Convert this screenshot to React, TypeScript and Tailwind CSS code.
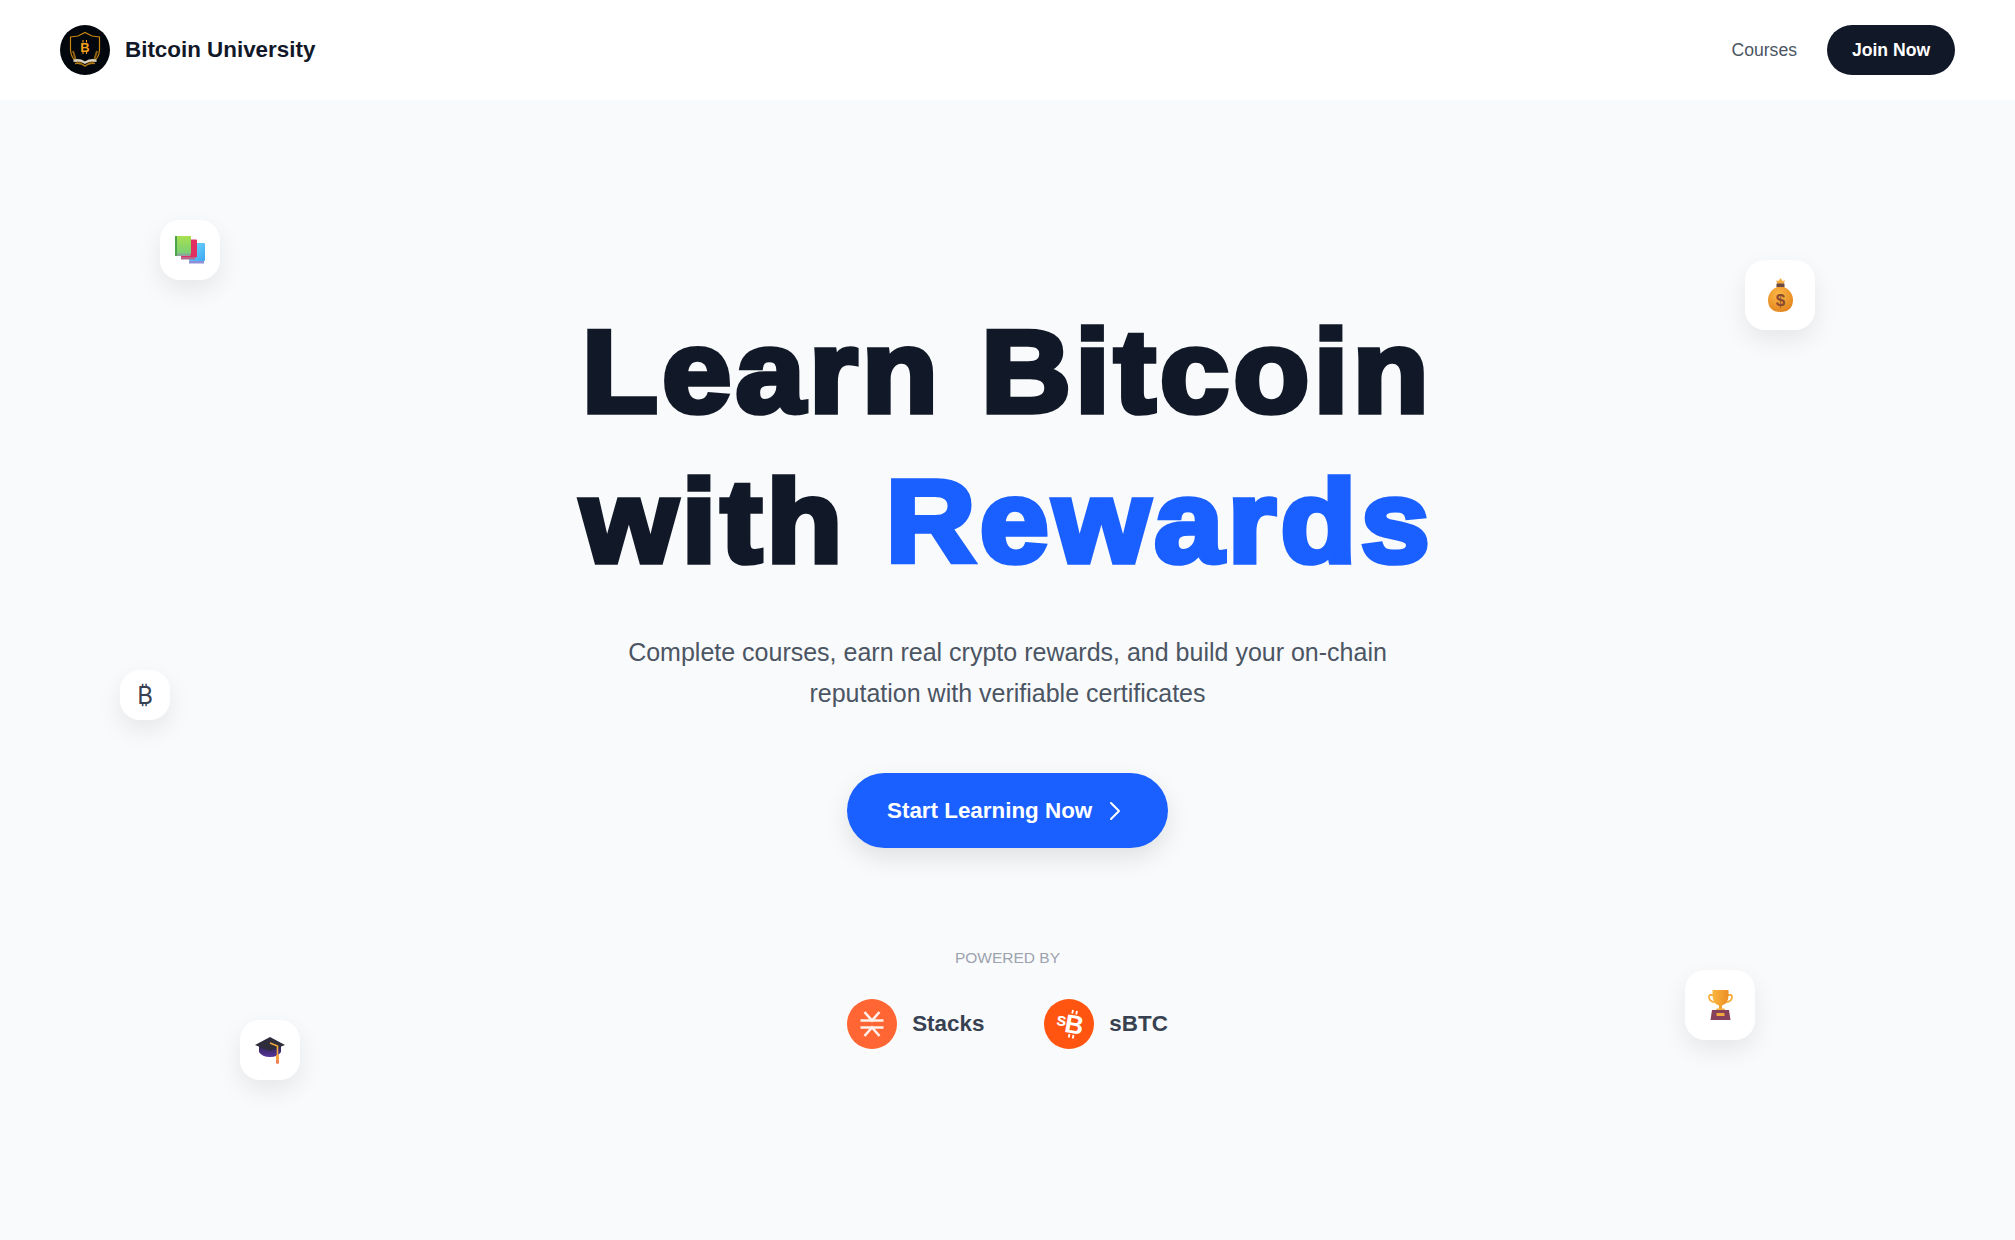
import type { ReactNode } from "react";

function LogoMark() {
  return (
    <svg viewBox="0 0 50 50" className="w-[50px] h-[50px] shrink-0">
      <circle cx="25" cy="25" r="25" fill="#02060d" />
      <path d="M10.5 12 L18 11 L25 7.5 L32 11 L39.5 12 L39.5 25 Q39 33 33 37 L17 37 Q11 33 10.5 25 Z" fill="none" stroke="#c98710" strokeWidth="1.2" />
      <path d="M13 26 L15.5 34 M37 26 L34.5 34" stroke="#8f6310" strokeWidth="2" />
      <path d="M13.5 34.5 Q20 33 25 36.5 Q30 33 36.5 34.5 L36.5 37 Q30 35.5 25 39 Q20 35.5 13.5 37 Z" fill="#d9d2bf" />
      <path d="M15 38.5 Q21 37.5 25 41 Q29 37.5 35 38.5" fill="none" stroke="#b07a12" strokeWidth="1.6" />
      <text x="25" y="27" textAnchor="middle" fontSize="13" fontWeight="700" fill="#f7a21b" fontFamily="'Liberation Sans', sans-serif">B</text>
      <path d="M23 15v2.5M26.5 15v2.5M23 26.5v2.5M26.5 26.5v2.5" stroke="#f7a21b" strokeWidth="1.1" />
    </svg>
  );
}

function BooksIcon() {
  return (
    <svg viewBox="0 0 30 28" className="w-[30px] h-[28px]">
      <defs>
        <linearGradient id="bookBlue" x1="0" y1="0" x2="1" y2="1">
          <stop offset="0" stopColor="#72dcff" />
          <stop offset="1" stopColor="#3ea6f0" />
        </linearGradient>
        <linearGradient id="bookGreen" x1="0" y1="0" x2="0" y2="1">
          <stop offset="0" stopColor="#a8e04f" />
          <stop offset="1" stopColor="#78cf78" />
        </linearGradient>
      </defs>
      <rect x="14" y="7" width="16" height="18" rx="1" fill="url(#bookBlue)" />
      <rect x="14" y="25" width="15" height="2.5" fill="#8f8fd8" />
      <rect x="6" y="3.5" width="16" height="18" rx="1" fill="#e32e62" />
      <rect x="6" y="21" width="14" height="2.5" fill="#b5698f" />
      <rect x="0" y="0" width="16" height="18" fill="url(#bookGreen)" />
      <rect x="0" y="0" width="2" height="20" fill="#4fa24d" />
      <rect x="2" y="17.5" width="13.5" height="2.5" fill="#8fa59a" />
    </svg>
  );
}

function MoneyBagIcon() {
  return (
    <svg viewBox="0 0 25 34" className="w-[25px] h-[34px]">
      <defs>
        <radialGradient id="bag" cx="0.42" cy="0.3" r="0.8">
          <stop offset="0" stopColor="#fdb845" />
          <stop offset="1" stopColor="#e0801b" />
        </radialGradient>
      </defs>
      <path d="M8 2.5 L10.5 3 L12.5 0 L14.5 3 L17 2.5 L15.5 6 L9.5 6 Z" fill="#f6ac3c" />
      <rect x="8.5" y="5.5" width="8" height="4" fill="#6b4a44" />
      <path d="M9 9 C4 11 0 16 0 22 C0 30 5 34 12.5 34 C20 34 25 30 25 22 C25 16 21 11 16 9 Z" fill="url(#bag)" />
      <text x="12.5" y="28" textAnchor="middle" fontSize="17" fontWeight="700" fill="#8a4a30" fontFamily="'Liberation Sans', sans-serif">$</text>
    </svg>
  );
}

function CapIcon() {
  return (
    <svg viewBox="0 0 30 27" className="w-[30px] h-[27px]">
      <defs>
        <linearGradient id="capBase" x1="0" y1="0" x2="0" y2="1">
          <stop offset="0" stopColor="#2e2350" />
          <stop offset="1" stopColor="#55349a" />
        </linearGradient>
      </defs>
      <path d="M4 8 L4 15 Q7 20 15 20 Q23 20 26 15 L26 8 Z" fill="url(#capBase)" />
      <path d="M15 0 L30 8 L15 14 L0 8 Z" fill="#2f2c3c" />
      <path d="M15 6 L22.5 9 L22.5 19" fill="none" stroke="#f2a83a" strokeWidth="1.6" />
      <rect x="21" y="18" width="3" height="5" fill="#f6a53b" />
      <rect x="21" y="22.5" width="3" height="4.5" rx="1.4" fill="#f47e52" />
    </svg>
  );
}

function TrophyIcon() {
  return (
    <svg viewBox="0 0 25 30" className="w-[25px] h-[30px]">
      <defs>
        <linearGradient id="cup" x1="0" y1="0" x2="1" y2="0">
          <stop offset="0" stopColor="#fab63e" />
          <stop offset="1" stopColor="#ec8d24" />
        </linearGradient>
      </defs>
      <path d="M5 5 H2.5 Q1 5 1 7 Q1 11 6.5 12.5 M20 5 H22.5 Q24 5 24 7 Q24 11 18.5 12.5" fill="none" stroke="#f6ad3a" strokeWidth="1.8" />
      <path d="M4.5 0 H20.5 V5 Q20.5 14 14 15.5 L11 15.5 Q4.5 14 4.5 5 Z" fill="url(#cup)" />
      <rect x="11" y="15" width="3" height="4" fill="#f2a02e" />
      <path d="M8.5 18.5 H16.5 L17 20 H8 Z" fill="#f6ad3a" />
      <path d="M4 20 H21 L22.5 30 H2.5 Z" fill="#86405a" />
      <rect x="8.5" y="23" width="8" height="3" fill="#f2a83a" />
    </svg>
  );
}

function StacksLogo() {
  return (
    <svg viewBox="0 0 50 50" className="w-[50px] h-[50px] shrink-0">
      <circle cx="25" cy="25" r="25" fill="#ff6633" />
      <g fill="none" stroke="#fff" strokeWidth="2.6" opacity="0.9">
        <path d="M13.5 21.5h23M13.5 28.5h23" />
        <path d="M17.5 13l7.5 8.5 7.5-8.5M17.5 37l7.5-8.5 7.5 8.5" />
      </g>
    </svg>
  );
}

function SbtcLogo() {
  return (
    <svg viewBox="0 0 50 50" className="w-[50px] h-[50px] shrink-0">
      <circle cx="25" cy="25" r="25" fill="#ff5510" />
      <g transform="rotate(10 25 25)" fill="#fff" fontFamily="'Liberation Sans', sans-serif" fontWeight="700">
        <text x="12" y="28" fontSize="18">s</text>
        <text x="21" y="33.5" fontSize="26">B</text>
      </g>
      <path d="M29 11l-.8 3.5M33 12l-.8 3.5M25.5 35l-.8 3.5M29.5 36l-.8 3.5" stroke="#fff" strokeWidth="1.8" />
    </svg>
  );
}

function FloatingCard({ className, children }: { className: string; children: ReactNode }) {
  return (
    <div className={`absolute flex items-center justify-center bg-white shadow-[0_10px_25px_rgba(0,0,0,0.08)] ${className}`}>
      {children}
    </div>
  );
}

export default function App() {
  return (
    <div className="min-h-[1240px] bg-[#f9fafb] font-['Liberation_Sans',Arial,sans-serif] flex flex-col">
      <header className="h-[100px] bg-white flex items-center justify-between px-[60px]">
        <div className="flex items-center gap-[15px]">
          <LogoMark />
          <span className="text-[22.4px] font-bold text-[#111827]">Bitcoin University</span>
        </div>
        <nav className="flex items-center gap-[30px]">
          <a className="text-[17.6px] text-[#4b5563]">Courses</a>
          <button className="h-[50px] w-[128px] rounded-full bg-[#111827] text-white text-[17.6px] font-bold">
            Join Now
          </button>
        </nav>
      </header>

      <main className="relative flex-1 flex flex-col items-center pt-[188px]">
        <FloatingCard className="left-[160px] top-[120px] w-[60px] h-[60px] rounded-[20px]">
          <BooksIcon />
        </FloatingCard>
        <FloatingCard className="left-[1745px] top-[160px] w-[70px] h-[70px] rounded-[20px]">
          <MoneyBagIcon />
        </FloatingCard>
        <FloatingCard className="left-[120px] top-[570px] w-[50px] h-[50px] rounded-[20px]">
          <span className="text-[24px] text-[#374151] font-['Inter',sans-serif] pt-[2px]">₿</span>
        </FloatingCard>
        <FloatingCard className="left-[240px] top-[920px] w-[60px] h-[60px] rounded-[20px]">
          <CapIcon />
        </FloatingCard>
        <FloatingCard className="left-[1685px] top-[870px] w-[70px] h-[70px] rounded-[20px]">
          <TrophyIcon />
        </FloatingCard>

        <h1 className="text-[124px] leading-[159px] font-bold tracking-[4.5px] [-webkit-text-stroke:6px] scale-y-[0.945] text-[#111827] text-center">
          Learn Bitcoin
          <br />
          with <span className="text-[#1a5fff]">Rewards</span>
        </h1>
        <p className="mt-[26px] text-[25px] leading-[41px] text-[#4b5563] text-center w-[800px]">
          Complete courses, earn real crypto rewards, and build your on-chain reputation with verifiable certificates
        </p>
        <button className="mt-[59px] h-[75px] w-[321px] pl-[40px] rounded-full bg-[#1a5fff] text-white text-[22.4px] font-bold flex items-center gap-[6px] shadow-[0_10px_25px_rgba(0,0,0,0.1)]">
          Start Learning Now
          <svg viewBox="0 0 32 32" className="w-[32px] h-[32px]" fill="none" stroke="currentColor" strokeWidth="2" strokeLinecap="round" strokeLinejoin="round">
            <path d="M13 8 L21 16 L13 24" />
          </svg>
        </button>
        <div className="mt-[98px] text-[15.5px] uppercase text-[#9ca3af]">Powered by</div>
        <div className="mt-[30px] flex items-center gap-[60px]">
          <div className="flex items-center gap-[15px]">
            <StacksLogo />
            <span className="text-[22.4px] font-bold text-[#374151]">Stacks</span>
          </div>
          <div className="flex items-center gap-[15px]">
            <SbtcLogo />
            <span className="text-[22.4px] font-bold text-[#374151]">sBTC</span>
          </div>
        </div>
      </main>
    </div>
  );
}
